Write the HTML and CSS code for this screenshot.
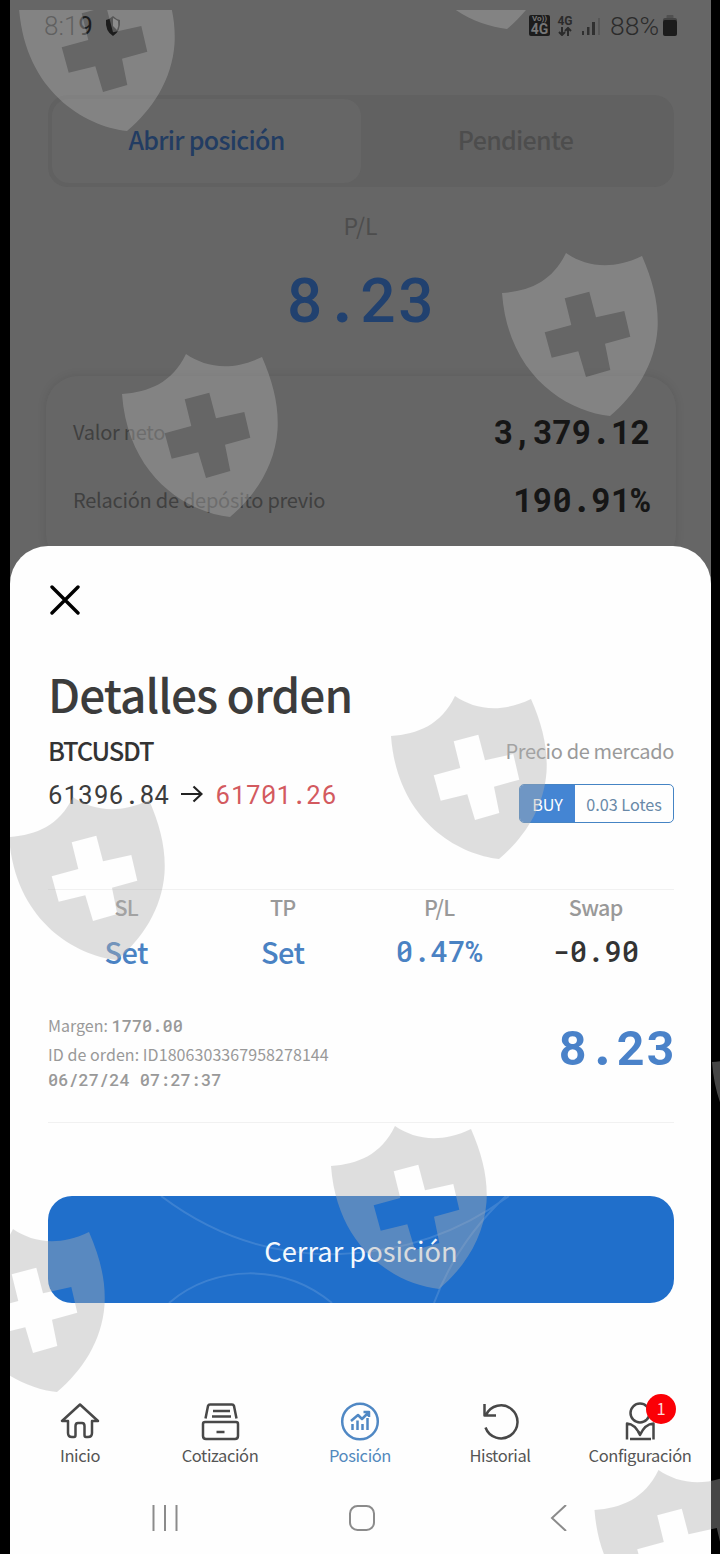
FILE: index.html
```html
<!DOCTYPE html>
<html lang="es">
<head>
<meta charset="UTF-8">
<meta name="viewport" content="width=device-width, initial-scale=1.0">
<link rel="stylesheet" href="styles.css">
<title>Detalles orden</title>
</head>
<body>
  <div class="phone">
    <div class="status-bar">
      <div class="status-left">
        <span class="clock">8:1<b>9</b></span>
        <svg width="16" height="20" viewBox="0 0 16 20"><path d="M1 4 Q5 3 8 0 Q11 3 15 4 Q16 15 8 20 Q0 15 1 4Z" fill="#1c1c1c"/><path d="M8 2 L13 5 Q14 10 12 14 L8 10Z" fill="#777"/></svg>
      </div>
      <div class="status-right">
        <span class="volte"><b>Vo))</b><b class="big">4G</b></span>
        <span class="data"><b>4G</b>
          <svg width="14" height="9" viewBox="0 0 14 9" fill="none" stroke="#2b2b2b" stroke-width="2"><path d="M4 0V8M1 5L4 8L7 5M10 9V1M7 4L10 1L13 4"/></svg>
        </span>
        <svg class="signal" width="18" height="18" viewBox="0 0 18 18" fill="#303030"><rect x="0" y="14" width="2" height="4"/><rect x="5" y="10" width="2.5" height="8"/><rect x="10" y="5" width="3" height="13"/><rect x="16" y="1" width="2" height="17" fill="#575757"/></svg>
        <span class="percent">88%</span>
        <svg class="battery" width="14" height="21" viewBox="0 0 14 21"><rect x="3.5" y="0" width="7" height="4" rx="1" fill="#505050"/><rect x="0" y="3" width="14" height="4" rx="2" fill="#444"/><rect x="0" y="5" width="14" height="16" rx="2" fill="#1c1c1c"/></svg>
      </div>
    </div>

    <div class="tabs">
      <div class="tab active">Abrir posición</div>
      <div class="tab">Pendiente</div>
    </div>
    <div class="pl-label">P/L</div>
    <div class="pl-total mono">8.23</div>

    <div class="account-card">
      <div class="account-row"><span>Valor neto</span><b class="mono">3,379.12</b></div>
      <div class="account-row"><span>Relación de depósito previo</span><b class="mono">190.91%</b></div>
    </div>

    <div class="sheet">
      <svg class="close" width="30" height="30" viewBox="0 0 30 30" fill="none" stroke="#000" stroke-width="3.4" stroke-linecap="round"><path d="M2 2L28 28M28 2L2 28"/></svg>
      <h1>Detalles orden</h1>
      <div class="order">
        <div class="order-left">
          <div class="symbol">BTCUSDT</div>
          <div class="prices">
            <span class="mono">61396.84</span>
            <svg width="22" height="18" viewBox="0 0 22 18" fill="none" stroke="#222" stroke-width="2.2"><path d="M0 9H20M12.500 1.500L20.500 9L12.500 16.500"/></svg>
            <span class="mono red">61701.26</span>
          </div>
        </div>
        <div class="order-right">
          <div class="market">Precio de mercado</div>
          <div class="lots"><span class="buy">BUY</span><span class="amount">0.03 Lotes</span></div>
        </div>
      </div>

      <div class="stats">
        <div class="stat"><span>SL</span><b>Set</b></div>
        <div class="stat"><span>TP</span><b>Set</b></div>
        <div class="stat"><span>P/L</span><b class="mono">0.47%</b></div>
        <div class="stat"><span>Swap</span><b class="mono dark">-0.90</b></div>
      </div>

      <div class="info">
        <div class="info-left">
          <div>Margen: <span class="mono">1770.00</span></div>
          <div class="order-id">ID de orden: ID1806303367958278144</div>
          <div class="mono">06/27/24 07:27:37</div>
        </div>
        <div class="profit mono">8.23</div>
      </div>

      <div class="close-button">
        <svg class="arcs" width="626" height="107" viewBox="0 0 626 107" fill="none" stroke="#fff" stroke-opacity=".13" stroke-width="2"><path d="M113 0C170 43 230 60 292 58C360 56 415 34 461 0M458 0C428 28 402 64 386 107M121 107C166 68 236 67 284 107"/></svg>
        <span>Cerrar posición</span>
      </div>

      <div class="nav">
        <div class="nav-item">
          <svg width="40" height="40" viewBox="0 0 40 40"><path d="M20 3.500L2 20H8V32Q8 36 12 36H14Q15.500 36 15.500 34V25Q15.500 22 18 22H22Q24.500 22 24.500 25V34Q24.500 36 26 36H28Q32 36 32 32V20H38Z"/></svg>
          <span>Inicio</span>
        </div>
        <div class="nav-item">
          <svg width="40" height="40" viewBox="0 0 40 40"><path d="M5.500 17.500L8 5Q8.500 3.500 10 3.500H32Q33.500 3.500 34 5L36.500 17.500M13 10H30M12 15.500H31M5 21H36Q38 21 38 23V35Q38 38 35 38H6Q3 38 3 35V23Q3 21 5 21ZM16.500 31H24.500"/></svg>
          <span>Cotización</span>
        </div>
        <div class="nav-item on">
          <svg width="40" height="40" viewBox="0 0 40 40"><circle cx="20" cy="20.500" r="17.800"/><path d="M11 20L18 14L22 18L29 11M23.500 11H29V16M12.500 23V29M17.500 19.500V29M22.500 23V29M27.500 17V29"/></svg>
          <span>Posición</span>
        </div>
        <div class="nav-item">
          <svg width="40" height="40" viewBox="0 0 40 40"><path d="M5.500 26.500A16.500 16.500 0 1 0 6 14M4.500 3V14.500H16"/></svg>
          <span>Historial</span>
        </div>
        <div class="nav-item">
          <svg width="40" height="40" viewBox="0 0 40 40"><circle cx="20" cy="12" r="9.500"/><path d="M7 38.500V22.500Q15 23 20 34Q25 23 33.500 22.500V38.500M17 29L21 33.500M10 38H31"/></svg>
          <span>Configuración</span>
          <i class="badge">1</i>
        </div>
      </div>

      <div class="system-bar">
        <svg width="26" height="26" viewBox="0 0 26 26"><path d="M1.500 0V26M13 0V26M24.500 0V26"/></svg>
        <svg width="26" height="26" viewBox="0 0 26 26"><rect x="1" y="1" width="24" height="24" rx="7.500"/></svg>
        <svg width="26" height="26" viewBox="0 0 26 26"><path d="M20 0L6 13L20 26"/></svg>
      </div>
    </div>
  </div>

  <!-- shields over everything -->
  <svg class="watermark" width="710" height="1544" viewBox="10 10 710 1544">
    <defs>
      <path id="shield" fill-rule="evenodd" d="M0 40C27 38 50 29 64 0C83 13 109 18 140 3C151 28 157 52 155.500 76C153 112 133 142 108 163C64 158 6 122 0 40Z M62.700 45.300L87.300 38.700L94 64.300L122.300 58L128.300 83.700L103 90.700L108.300 117L84 124L76.300 98.300L49.700 104.700L42.700 79.300L69.300 72Z"/>
    </defs>
    <use href="#shield" x="19" y="-32"/>
    <use href="#shield" x="399" y="-134"/>
    <use href="#shield" x="122" y="354"/>
    <use href="#shield" x="502" y="253"/>
    <use href="#shield" x="391" y="696"/>
    <use href="#shield" x="9" y="797"/>
    <use href="#shield" x="712" y="1022"/>
    <use href="#shield" x="331" y="1126"/>
    <use href="#shield" x="-51" y="1229"/>
    <use href="#shield" x="594.500" y="1470"/>
  </svg>
</body>
</html>
```
FILE: styles.css
```css
* {
  box-sizing: border-box;
  margin: 0;
  padding: 0;
}

body {
  background-color: #000;
  font-family: "Noto Sans CJK SC", "Noto Sans", sans-serif;
  height: 1554px;
  overflow: hidden;
  position: relative;
}

.phone {
  width: 701px;
  height: 1554px;
  margin-left: 10px;
  background-color: #666;
  display: flex;
  flex-direction: column;
  overflow: hidden;
}

.mono {
  font-family: "Roboto Mono", "Liberation Mono", monospace;
  white-space: nowrap;
}

/* status bar */
.status-bar {
  height: 52px;
  padding: 0 34px 0 34px;
  display: flex;
  justify-content: space-between;
  align-items: center;
}
.status-left,
.status-right {
  display: flex;
  align-items: center;
}
.clock,
.percent {
  font-family: Roboto, sans-serif;
  font-weight: 300;
  font-size: 26px;
  color: #2b2b2b;
}
.clock {
  margin-right: 12px;
}
.clock b {
  font-weight: 400;
  color: #1c1c1c;
}
.volte {
  width: 21px;
  height: 21px;
  border-radius: 2px;
  background-color: #1c1c1c;
  color: #777;
  font-family: Roboto, sans-serif;
  font-size: 8px;
  line-height: 8px;
  text-align: center;
}
.volte b {
  display: block;
}
.volte .big {
  font-size: 14px;
  line-height: 12px;
}
.data {
  width: 16px;
  margin: 0 9px 0 7px;
  font-family: Roboto, sans-serif;
  font-size: 12px;
  line-height: 10px;
  color: #2b2b2b;
  text-align: center;
}
.data svg {
  display: block;
  margin: 1px auto 0;
}
.percent {
  margin: 0 4px 0 10px;
  font-size: 26.5px;
}

/* page behind the sheet */
.tabs {
  margin: 43px 37px 0 38px;
  height: 93px;
  padding: 4px;
  display: flex;
  border-radius: 20px;
  background-color: #616161;
}
.tab {
  flex: 1;
  display: flex;
  align-items: center;
  justify-content: center;
  padding-bottom: 3px;
  border-radius: 17px;
  font-size: 25px;
  font-weight: 500;
  letter-spacing: -0.7px;
  color: #4d4d4d;
}
.tab.active {
  background-color: #666;
  color: #223c62;
}
.pl-label {
  margin-top: 21px;
  height: 34px;
  line-height: 34px;
  text-align: center;
  font-size: 23px;
  color: #4d4d4d;
}
.pl-total {
  height: 72px;
  line-height: 72px;
  margin-top: 20px;
  text-align: center;
  font-size: 62px;
  font-weight: 500;
  color: #21416f;
}
.account-card {
  margin: 42px 35px 0 36px;
  height: 190px;
  flex-shrink: 0;
  padding: 21px 26px 0 27px;
  border-radius: 32px;
  background-color: #666;
  box-shadow: 0 0 10px rgba(0, 0, 0, 0.1);
}
.account-row {
  height: 68px;
  display: flex;
  justify-content: space-between;
  align-items: center;
  font-size: 20px;
  letter-spacing: -0.25px;
  color: #404040;
}
.account-row b {
  font-size: 33px;
  color: #161616;
}

/* bottom sheet */
.sheet {
  position: relative;
  flex-shrink: 0;
  height: 1008px;
  margin-top: -20px;
  padding: 39px 37px 0 38px;
  background-color: #fefefe;
  border-radius: 38px 38px 0 0;
}
.close {
  display: block;
  margin-left: 2px;
}
h1 {
  margin-top: 43px;
  height: 70px;
  line-height: 70px;
  font-size: 46px;
  font-weight: 500;
  letter-spacing: -0.95px;
  color: #3c3c3c;
}
.order {
  display: flex;
  justify-content: space-between;
  height: 162px;
  border-bottom: 1px solid #f1f1f1;
}
.symbol {
  margin-top: 4px;
  height: 36px;
  line-height: 36px;
  font-size: 25.5px;
  font-weight: 500;
  letter-spacing: -1.2px;
  color: #333;
}
.prices {
  display: flex;
  align-items: center;
  gap: 12px;
  margin-top: 11px;
  height: 30px;
  line-height: 30px;
  font-size: 25.3px;
  color: #3c3c3c;
}
.red {
  color: #d35a5f;
}
.market {
  margin-top: 8px;
  height: 30px;
  line-height: 30px;
  font-size: 20px;
  letter-spacing: -0.35px;
  color: #9a9a9a;
}
.order-right {
  display: flex;
  flex-direction: column;
  align-items: flex-end;
}
.lots {
  display: flex;
  width: 155px;
  height: 39px;
  margin-top: 18px;
  border: 1px solid #4584c4;
  border-radius: 5px;
  overflow: hidden;
  font-size: 16.2px;
  line-height: 39px;
  text-align: center;
}
.buy {
  width: 55px;
  background-color: #4485d3;
  color: #fff;
}
.amount {
  flex: 1;
  color: #6989a8;
}
.stats {
  display: flex;
  height: 106px;
}
.stat {
  flex: 1;
  display: flex;
  flex-direction: column;
  align-items: center;
  font-size: 21.5px;
  color: #999;
}
.stat span {
  height: 36px;
  line-height: 34px;
  font-weight: 500;
  letter-spacing: -0.7px;
}
.stat b {
  margin-top: 5px;
  height: 40px;
  line-height: 40px;
  font-size: 29px;
  font-weight: 500;
  letter-spacing: -0.6px;
  color: #4a82c3;
}
.stat b.mono {
  letter-spacing: 0;
}
.stat .dark {
  color: #333;
}
.info {
  display: flex;
  justify-content: space-between;
  height: 127px;
  padding-top: 16px;
  border-bottom: 1px solid #f1f1f1;
  font-size: 16px;
  line-height: 26px;
  color: #999;
}
.info .mono {
  font-size: 17px;
  font-weight: 500;
}
.order-id {
  margin-top: 2px;
  letter-spacing: 0.07px;
}
.info .profit {
  margin: 21px -1px 0 0;
  font-size: 48.500px;
  font-weight: 700;
  color: #4a82c9;
}
.close-button {
  position: relative;
  height: 107px;
  margin-top: 73px;
  padding-top: 1px;
  border-radius: 24px;
  background-color: #206fcb;
  display: flex;
  align-items: center;
  justify-content: center;
  font-size: 27.3px;
  color: #f4f8fd;
  overflow: hidden;
}
.arcs {
  position: absolute;
  left: 0;
  top: 0;
}

/* bottom navigation */
.nav {
  display: flex;
  margin: 98px -37px 0 -38px;
}
.nav-item {
  position: relative;
  width: 140px;
  flex-shrink: 0;
  display: flex;
  flex-direction: column;
  align-items: center;
  font-size: 16.5px;
  line-height: 29px;
  letter-spacing: -0.4px;
  color: #555;
}
.nav-item svg {
  fill: none;
  stroke: #484848;
  stroke-width: 2.5;
  stroke-linejoin: round;
}
.nav-item.on {
  color: #5289bd;
}
.nav-item.on svg {
  stroke: #5088c4;
}
.badge {
  position: absolute;
  left: 76px;
  top: -7px;
  width: 30px;
  height: 30px;
  border-radius: 50%;
  background-color: #fb0006;
  color: #ffd9d9;
  font-style: normal;
  text-align: center;
}
.system-bar {
  display: flex;
  justify-content: space-between;
  margin-top: 35px;
  padding: 0 102px 0 104px;
}
.system-bar svg {
  fill: none;
  stroke: #8b8b8b;
  stroke-width: 2;
}

.watermark {
  position: absolute;
  left: 10px;
  top: 10px;
  fill: #b0b0b0;
  opacity: 0.4;
}
```
